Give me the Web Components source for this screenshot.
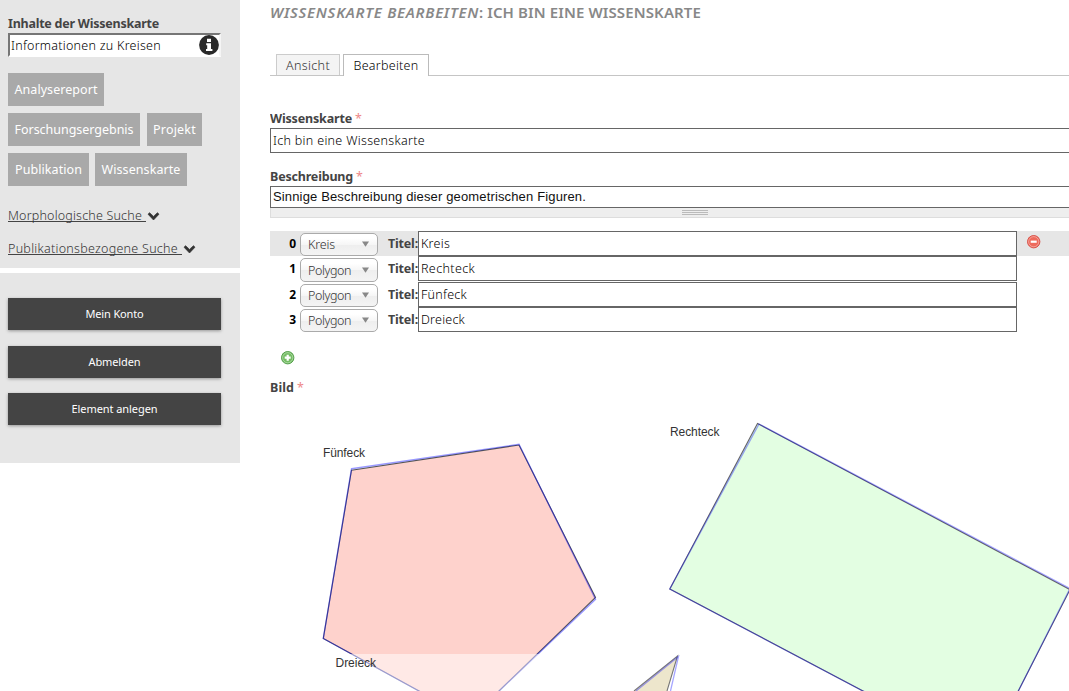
<!DOCTYPE html>
<html lang="de"><head><meta charset="utf-8"><title>Wissenskarte bearbeiten</title>
<style>
html,body{margin:0;height:691px;overflow:hidden;background:#fff}
body{font-family:"Noto Sans","Open Sans",sans-serif;font-size:12.5px;color:#444}
</style></head><body>
<knowledge-page></knowledge-page>
<script>
const define=(name,html,after)=>customElements.define(name,class extends HTMLElement{
  constructor(){super();this.attachShadow({mode:'open'}).innerHTML=html;}
  connectedCallback(){if(after)after(this,this.shadowRoot);}
});
/* Text with an even tracking so that it fills the width in its w attribute. */
define('tracked-text','<style>:host{display:inline-block;white-space:pre}</style><slot></slot>',(h)=>{
  const w=parseFloat(h.getAttribute('w')),n=h.textContent.length;
  h.style.letterSpacing=((w-h.getBoundingClientRect().width)/n)+'px';
});
define('type-chip','<style>:host{display:flex;height:33px;align-items:center;justify-content:center;background:#a9a9a9;color:#fff;flex:none;box-sizing:border-box}</style><slot></slot>',h=>h.style.width=h.getAttribute('w')+'px');
define('search-link',`<style>:host{display:flex;height:33px;align-items:center;color:#333;font-weight:300}.u{border-bottom:1px solid #444;height:12px;line-height:14px;display:block;flex:none}svg{margin-left:1px;margin-top:1px;flex:none}</style><span class="u"><slot></slot></span><svg width="13" height="9" viewBox="0 0 13 9"><path d="M1 2.2 2.6.7 6.5 4.4 10.4.7 12 2.2 6.5 8Z" fill="#333" stroke="#333" stroke-width=".7" stroke-linejoin="round"/></svg>`,
 (h,r)=>r.querySelector('.u').style.width=h.getAttribute('w')+'px');
define('menu-button','<style>:host{display:flex;height:32px;box-sizing:border-box;padding-bottom:2px;align-items:center;justify-content:center;background:#444;color:#fff;font-size:11px;box-shadow:0 1px 3px rgba(0,0,0,.35)}</style><slot></slot>');
define('side-bar',`<style>
:host{display:block;width:240px;flex:none}
.a{height:268px;background:#e6e6e6;padding:14px 8px 0;box-sizing:border-box}
.l{font-weight:700;height:19px;line-height:20px}
.in{height:24px;width:213px;box-sizing:border-box;border:2px solid;border-color:#767676 #f5f5f5 #fff #767676;background:#fff;color:#000;font-weight:300;display:flex;align-items:center;justify-content:space-between;padding-left:1px}
.in svg{flex:none;margin-right:-1px}
.row{display:flex;gap:7px;margin-bottom:7px}.row.c{gap:6px}
.b{margin-top:5px;height:190px;background:#e6e6e6;padding:25px 19px 0 8px;box-sizing:border-box}
menu-button{margin-bottom:16px}menu-button.s{margin-bottom:15px}
</style><div class="a"><div class="l"><tracked-text w="151">Inhalte der Wissenskarte</tracked-text></div>
<div class="in"><tracked-text w="150">Informationen zu Kreisen</tracked-text><svg width="21" height="21" viewBox="0 0 21 21"><circle cx="10" cy="10" r="9.9" fill="#292929"/><path d="M8 3.8h4v3.2H8zM7.2 8.2H12v5.8h1.4v2H7v-2h1.2v-3.8h-1z" fill="#fff"/></svg></div>
<div class="row" style="margin-top:16px"><type-chip w="96"><tracked-text w="83">Analysereport</tracked-text></type-chip></div>
<div class="row"><type-chip w="132"><tracked-text w="119">Forschungsergebnis</tracked-text></type-chip><type-chip w="55"><tracked-text w="43">Projekt</tracked-text></type-chip></div>
<div class="row c"><type-chip w="81"><tracked-text w="67">Publikation</tracked-text></type-chip><type-chip w="92"><tracked-text w="79">Wissenskarte</tracked-text></type-chip></div>
<search-link w="138" style="margin-top:13px"><tracked-text w="134">Morphologische Suche</tracked-text></search-link>
<search-link w="174"><tracked-text w="170">Publikationsbezogene Suche</tracked-text></search-link></div>
<div class="b"><menu-button><tracked-text w="58">Mein Konto</tracked-text></menu-button><menu-button class="s"><tracked-text w="52">Abmelden</tracked-text></menu-button><menu-button><tracked-text w="86">Element anlegen</tracked-text></menu-button></div>`);
define('tab-bar',`<style>:host{display:flex;height:22px;box-sizing:border-box;padding-left:6px;gap:3px;font-weight:300;background:linear-gradient(#c5c5c5,#c5c5c5) left bottom/100% 1px no-repeat}
div{box-sizing:border-box;border:1px solid #ccc;border-bottom:0;display:flex;align-items:center;justify-content:center}
.i{width:64px;height:21px;background:#f4f4f4;color:#333}.o{width:86px;height:22px;background:#fff;border-color:#bbb;color:#000}</style><div class="i"><tracked-text w="44">Ansicht</tracked-text></div><div class="o"><tracked-text w="65">Bearbeiten</tracked-text></div>`);
define('field-label','<style>:host{display:flex;height:20px;line-height:22px;font-weight:700;gap:3px}i{font-style:normal;font-weight:400;color:#ee8888}</style><slot></slot><i>*</i>');
define('text-field','<style>:host{display:flex;box-sizing:border-box;height:25px;border:1px solid #666;background:#fff;color:#000;font-weight:300;align-items:center;padding:0 2px 1px}</style><slot></slot>');
define('type-select',`<style>:host{display:flex;box-sizing:border-box;width:78px;height:23px;flex:none;border:1px solid #aaa;border-radius:5px;align-items:center;justify-content:space-between;padding:0 8px 0 7px;color:#333;font-weight:300;background:linear-gradient(#fff 20%,#f6f6f6 50%,#eee 52%,#f4f4f4)}svg{flex:none;margin-top:-1px}</style><slot></slot><svg width="7" height="6" viewBox="0 0 8 6"><path d="M0 0h8L4 6z" fill="#888"/></svg>`);
define('round-icon',`<style>:host{display:block;width:14px;height:14px}svg{display:block}</style><svg width="14" height="14" viewBox="0 0 14 14"></svg>`,(h,r)=>{
 const p=h.getAttribute('kind')==='plus',a=p?'#4a9840':'#d64b42',b=p?'#74bd63':'#ee6a5c';
 r.querySelector('svg').innerHTML=`<circle cx="6.7" cy="6.7" r="6.2" fill="${b}" stroke="${a}" stroke-width=".9"/><circle cx="6.7" cy="6.7" r="5.1" fill="none" stroke="#fff" stroke-opacity=".4" stroke-width=".9"/><path d="${p?'M5.6 3.7h2.2v1.9h1.9v2.2H7.8v1.9H5.6V7.8H3.7V5.6h1.9z':'M3.7 5.6h6v2.2h-6z'}" fill="#fff"/>`;
});
define('shape-row',`<style>:host{display:flex;height:25px;align-items:flex-start}:host([first]){background:#e6e6e6}
.n{width:26px;text-align:right;margin-right:4px;font:700 12px/25px "Noto Sans",sans-serif;color:#000}type-select{margin-top:2px}:host([n="1"]) type-select{height:24px;padding-top:1px}
.t{font-weight:700;line-height:26px;margin-left:10px;width:30px;flex:none}text-field{width:599px;flex:none}round-icon{margin:4px 0 0 10px}</style>
<div class="n"></div><type-select></type-select><div class="t"><tracked-text w="30">Titel:</tracked-text></div><text-field><slot></slot></text-field>`,(h,r)=>{
 r.querySelector('.n').textContent=h.getAttribute('n');
 const k=h.getAttribute('kind');
 r.querySelector('type-select').innerHTML=`<tracked-text w="${k==='Kreis'?27:43}">${k}</tracked-text>`;
 if(h.hasAttribute('first'))r.querySelector('text-field').insertAdjacentHTML('afterend','<round-icon kind="minus"></round-icon>');
});
define('shape-canvas',`<style>:host{display:block;height:291px}svg{display:block;font:12px "Liberation Sans",Arial,sans-serif}</style>
<svg width="799" height="291" viewBox="270 400 799 291">
<g stroke-linejoin="miter" stroke-width="1.1">
<path d="M351.5 470.2 519 445 595.5 597.5 499 691 468 719 419 691 323.3 638.5z" fill="#fed2cc" stroke="#555"/>
<path d="M351.5 468.8 519 444.3 595.5 599.3 499 691 468 719 419 691 323.3 638.5z" fill="none" stroke="#00f" stroke-opacity=".4" stroke-width="1.4"/>
<path d="M757.5 423.5 1070 589.7 1018.3 691 990 746 863 691 669.8 589z" fill="#e3fee2" stroke="#666"/>
<path d="M759 424 1070 588.5 1018.3 691 990 746 863 691 669.8 589z" fill="none" stroke="#00f" stroke-opacity=".35" stroke-width="1.4"/>
<path d="M634 691 677.5 656 667 691z" fill="#ede6cc" stroke="none"/>
<path d="M634 691 677.5 656 667 691" fill="none" stroke="#777"/>
<path d="M636 691 678.5 656.5 670.5 691" fill="none" stroke="#00f" stroke-opacity=".35" stroke-width="1.3"/>
</g><rect x="322" y="654" width="310" height="37" fill="#fff" fill-opacity=".5"/>
<g fill="#333"><text x="323" y="457" textLength="42">Fünfeck</text><text x="670" y="436" textLength="49.5">Rechteck</text><text x="335.5" y="667" textLength="40.5">Dreieck</text></g></svg>`);
define('edit-form',`<style>:host{display:block;width:799px;overflow:hidden}
h1{margin:0 0 28px;height:26px;font-size:15px;line-height:24px;font-weight:600;color:#888;white-space:pre;display:flex}
h1 em{font-style:italic}
.w{margin-right:-2px}.ta{height:22px;width:802px;padding-bottom:1px;font:13px "Liberation Sans",Arial,sans-serif;color:#111}
.grip{height:10px;box-sizing:border-box;background:#eee;border:solid #ddd;border-width:0 0 1px 1px;display:flex;justify-content:center;padding:2px 0 0 49px}
.grip i{display:block;width:26px;height:5px;background:repeating-linear-gradient(#bbb 0 1px,#eee 1px 2px)}
</style><h1><em><tracked-text w="209">WISSENSKARTE BEARBEITEN</tracked-text></em><tracked-text w="222">: ICH BIN EINE WISSENSKARTE</tracked-text></h1>
<tab-bar></tab-bar>
<field-label style="margin-top:32px"><tracked-text w="82">Wissenskarte</tracked-text></field-label>
<text-field class="w"><tracked-text w="152">Ich bin eine Wissenskarte</tracked-text></text-field>
<field-label style="margin-top:13px"><tracked-text w="83">Beschreibung</tracked-text></field-label>
<text-field class="ta w"><tracked-text w="313">Sinnige Beschreibung dieser geometrischen Figuren.</tracked-text></text-field>
<div class="grip"><i></i></div>
<shape-row first n="0" kind="Kreis" style="margin-top:13px"><tracked-text w="29">Kreis</tracked-text></shape-row>
<shape-row n="1" kind="Polygon" style="margin-bottom:1px"><tracked-text w="54">Rechteck</tracked-text></shape-row>
<shape-row n="2" kind="Polygon"><tracked-text w="46">Fünfeck</tracked-text></shape-row>
<shape-row n="3" kind="Polygon"><tracked-text w="44">Dreieck</tracked-text></shape-row>
<round-icon kind="plus" style="margin:19px 0 0 11px"></round-icon>
<field-label style="margin-top:12px;margin-bottom:3px"><tracked-text w="24">Bild</tracked-text></field-label>
<shape-canvas></shape-canvas>`);
define('knowledge-page','<style>:host{display:flex;gap:30px;width:1069px;height:691px;overflow:hidden}</style><side-bar></side-bar><edit-form></edit-form>');
</script></body></html>
